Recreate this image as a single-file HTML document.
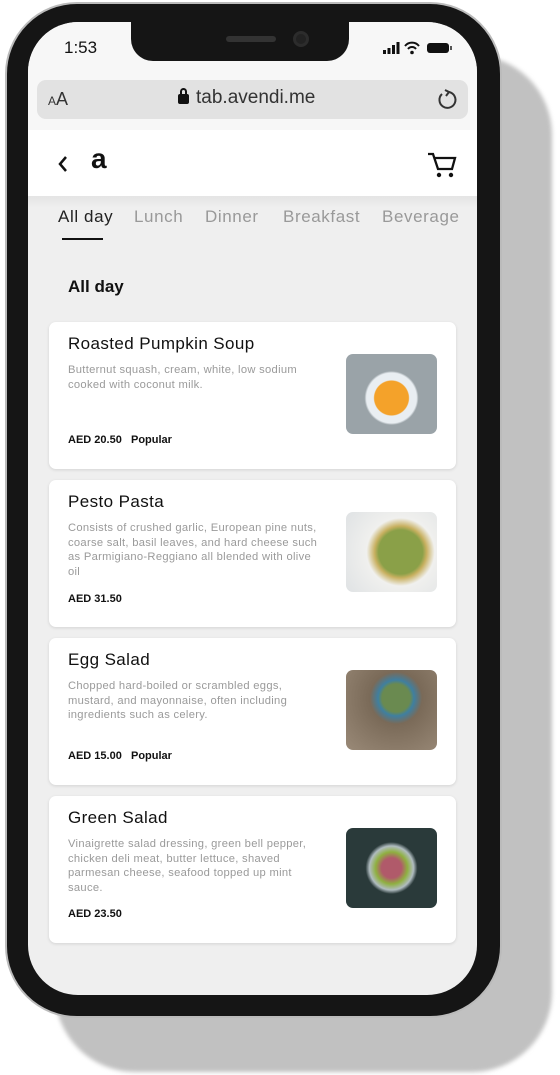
<!DOCTYPE html>
<html><head><style>
*{margin:0;padding:0;box-sizing:border-box}
body{width:560px;height:1075px;background:#fff;position:relative;overflow:hidden;font-family:"Liberation Sans",sans-serif}
.shadow{position:absolute;left:55px;top:55px;width:497px;height:1017px;background:#c1c1c1;border-radius:80px;filter:blur(2px)}
.frame{position:absolute;left:5px;top:2px;width:497px;height:1016px;background:#151515;border-radius:72px;border:2px solid #bbb}
.screen{position:absolute;left:28px;top:22px;width:449px;height:973px;background:#efefef;border-radius:50px;overflow:hidden}
.notch{position:absolute;left:131px;top:22px;width:218px;height:39px;background:#151515;border-radius:0 0 22px 22px}
.abs{position:absolute}
.card{position:absolute;left:21px;width:407px;height:147px;background:#fff;border-radius:7px;box-shadow:0 1px 3px rgba(0,0,0,.12)}
.card h3{position:absolute;left:19px;top:12px;font-size:17px;font-weight:normal;color:#111;letter-spacing:.4px}
.card p{position:absolute;left:19px;top:41px;width:258px;font-size:11.2px;line-height:14.5px;color:#9a9a9a;letter-spacing:.3px}
.card .pr{position:absolute;left:19px;font-size:11px;font-weight:bold;color:#111}
.card .img{position:absolute;left:297px;top:32px;width:91px;height:80px;border-radius:7px}
.tab{position:absolute;top:185px;font-size:17px;color:#999;letter-spacing:.6px;white-space:nowrap}
</style></head><body>
<div class="shadow"></div>
<div class="frame"></div>
<div class="screen">
 <div class="abs" style="left:0;top:0;width:449px;height:108px;background:#f7f7f7"></div>
 <div class="abs" style="left:36px;top:16px;font-size:17px;color:#111">1:53</div>
 <svg class="abs" style="left:355px;top:18px" width="72" height="16" viewBox="0 0 72 16">
  <rect x="0" y="10" width="3" height="4" fill="#111"/><rect x="4.5" y="8" width="3" height="6" fill="#111"/><rect x="9" y="5" width="3" height="9" fill="#111"/><rect x="13.5" y="2" width="3" height="12" fill="#111"/>
  <path d="M22 6 A9 9 0 0 1 36 6" fill="none" stroke="#111" stroke-width="2"/><path d="M25 9 A5 5 0 0 1 33 9" fill="none" stroke="#111" stroke-width="2"/><circle cx="29" cy="12.5" r="1.8" fill="#111"/>
  <rect x="44" y="3" width="22" height="10" rx="3" fill="#111"/><rect x="67" y="6" width="2" height="4" fill="#555"/>
 </svg>
 <div class="abs" style="left:9px;top:58px;width:431px;height:39px;background:#e2e2e2;border-radius:9px"></div>
 <div class="abs" style="left:20px;top:67px;font-size:18px;color:#333"><span style="font-size:12px">A</span>A</div>
 <div class="abs" style="left:150px;top:72px;width:11px;height:10px;background:#111;border-radius:2px"></div>
 <div class="abs" style="left:152px;top:66px;width:7px;height:8px;border:2px solid #111;border-bottom:none;border-radius:4px 4px 0 0"></div>
 <div class="abs" style="left:168px;top:65px;font-size:19px;color:#333">tab.avendi.me</div>
 <svg class="abs" style="left:408px;top:66px" width="22" height="22" viewBox="0 0 22 22"><path d="M13 4 A8 8 0 1 1 6 6" fill="none" stroke="#333" stroke-width="2"/><path d="M9 2 L13 4 L10 8" fill="none" stroke="#333" stroke-width="2"/></svg>
 <div class="abs" style="left:0;top:108px;width:449px;height:66px;background:#fff"></div>
 <svg class="abs" style="left:28px;top:132px" width="14" height="20"><path d="M10 3 L4 10 L10 17" fill="none" stroke="#111" stroke-width="2.5"/></svg>
 <div class="abs" style="left:63px;top:122px;font-size:28px;font-weight:bold;color:#111;line-height:30px">a</div>
 <svg class="abs" style="left:398px;top:129px" width="32" height="28" viewBox="0 0 32 28"><path d="M2 3 L7 3 L12 18 L26 18 L29 7 L9 7" fill="none" stroke="#111" stroke-width="2.3"/><circle cx="13" cy="24" r="2.2" fill="#111"/><circle cx="25" cy="24" r="2.2" fill="#111"/></svg>
 <div class="abs" style="left:0;top:174px;width:449px;height:12px;background:linear-gradient(#e4e4e4,#efefef)"></div>
 <div class="tab" style="left:30px;color:#222">All day</div>
 <div class="tab" style="left:106px">Lunch</div>
 <div class="tab" style="left:177px">Dinner</div>
 <div class="tab" style="left:255px">Breakfast</div>
 <div class="tab" style="left:354px">Beverage</div>
 <div class="abs" style="left:34px;top:216px;width:41px;height:2px;background:#111"></div>
 <div class="abs" style="left:40px;top:255px;font-size:17px;font-weight:bold;color:#111">All day</div>

 <div class="card" style="top:300px"><h3>Roasted Pumpkin Soup</h3><p>Butternut squash, cream, white, low sodium cooked with coconut milk.</p><div class="pr" style="top:112px">AED 20.50 &nbsp;&nbsp;Popular</div>
  <div class="img" style="background:radial-gradient(circle at 50% 55%,#f4a22a 0 17px,#e9eef2 18px 25px,#9aa3a8 27px)"></div></div>
 <div class="card" style="top:458px"><h3>Pesto Pasta</h3><p>Consists of crushed garlic, European pine nuts, coarse salt, basil leaves, and hard cheese such as Parmigiano-Reggiano all blended with olive oil</p><div class="pr" style="top:113px">AED 31.50</div>
  <div class="img" style="background:radial-gradient(circle at 60% 50%,#8aa048 0 22px,#c8b060 26px,#f0f0ee 34px,#dfe2e4)"></div></div>
 <div class="card" style="top:616px"><h3>Egg Salad</h3><p>Chopped hard-boiled or scrambled eggs, mustard, and mayonnaise, often including ingredients such as celery.</p><div class="pr" style="top:112px">AED 15.00 &nbsp;&nbsp;Popular</div>
  <div class="img" style="background:radial-gradient(circle at 55% 35%,#6a8a50 0 14px,#3f7fa0 18px,#7a6a58 26px,#9a8a78)"></div></div>
 <div class="card" style="top:774px"><h3>Green Salad</h3><p>Vinaigrette salad dressing, green bell pepper, chicken deli meat, butter lettuce, shaved parmesan cheese, seafood topped up mint sauce.</p><div class="pr" style="top:112px">AED 23.50</div>
  <div class="img" style="background:radial-gradient(circle at 50% 50%,#b05a6a 0 10px,#8fb040 16px,#b0bcc0 22px,#2a3a3a 26px)"></div></div>
</div>
<div class="notch"></div>
<div class="abs" style="left:226px;top:36px;width:50px;height:6px;background:#333;border-radius:3px"></div>
<div class="abs" style="left:293px;top:31px;width:16px;height:16px;background:#222;border-radius:50%;border:3px solid #2c2c2c"></div>
</body></html>
